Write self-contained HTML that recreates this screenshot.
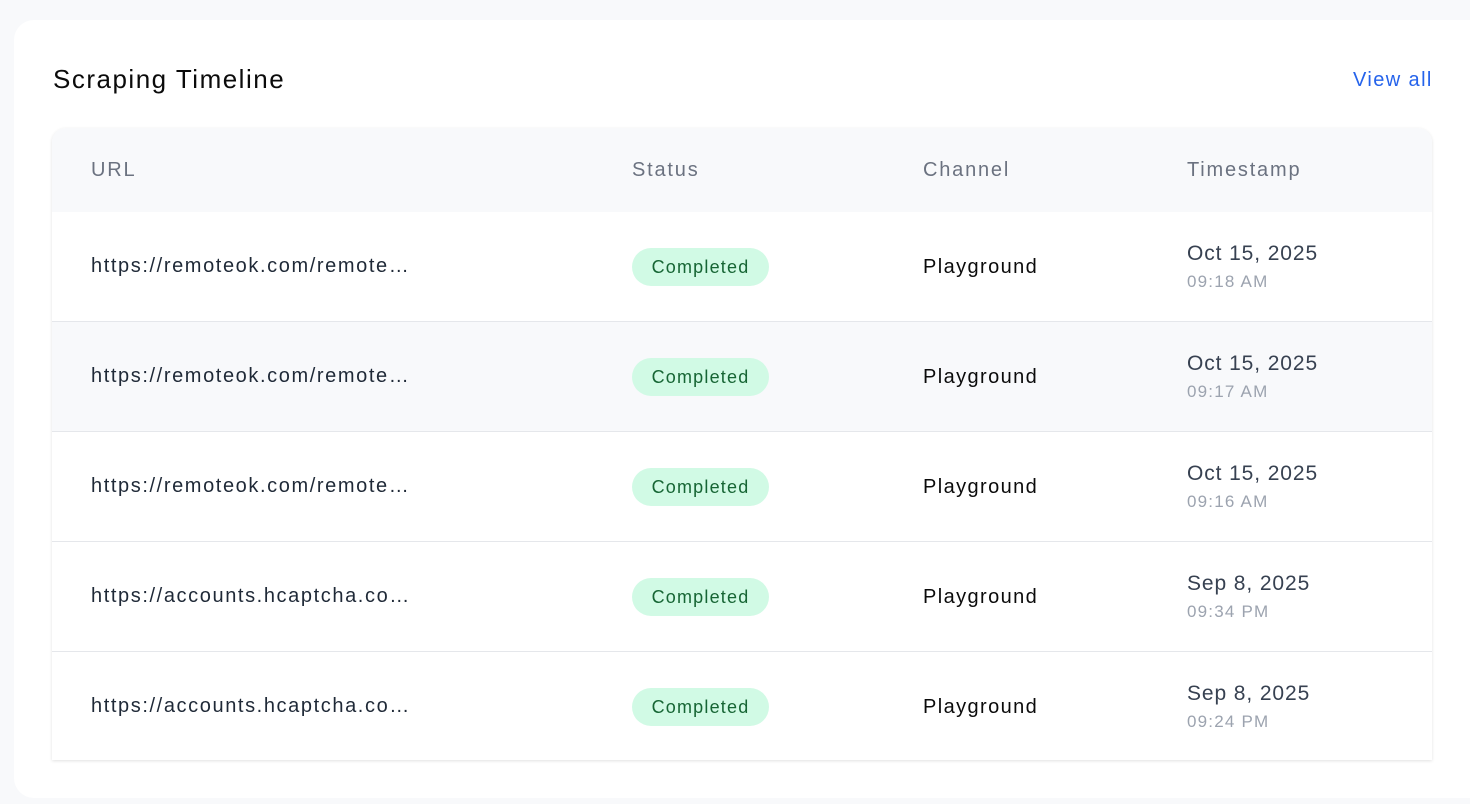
<!DOCTYPE html>
<html><head><style>
body{margin:0;width:1470px;height:804px;background:#f8f9fb;font-family:"Liberation Sans",sans-serif;overflow:hidden;position:relative;letter-spacing:1.4px}
.card{position:absolute;left:14px;top:20px;width:1480px;height:778px;background:#fff;border-radius:20px}
h1{position:absolute;left:53px;top:64px;margin:0;font-size:26px;font-weight:400;color:#0b0b0b;letter-spacing:1.5px}
.va{position:absolute;left:1353px;top:69px;font-size:20px;color:#2563eb}
.tbl{position:absolute;left:52px;top:128px;width:1380px;height:632px;background:#fff;border-radius:14px 14px 0 0;box-shadow:0 1px 3px rgba(0,0,0,.12);overflow:hidden}
.hd{height:84px;background:#f8f9fb;position:relative;color:#6b7280;font-size:20px;letter-spacing:1.8px}
.row{height:109px;border-bottom:1px solid #e5e7eb;position:relative;font-size:20px}
.row:last-child{border-bottom:none}
.c{position:absolute;white-space:nowrap}
.hd .c{top:31px}
.u{left:39px;top:43px;color:#1f2937;letter-spacing:1.6px}
.b{left:580px;top:36px;width:137px;height:38px;border-radius:19px;background:#d1fae5;color:#166534;font-size:18px;text-align:center;line-height:38px;letter-spacing:1.2px}
.ch{left:871px;top:44px;color:#0b0b0b}
.d{left:1135px;top:30px;color:#374151;font-size:21px;letter-spacing:0.9px}
.t{left:1135px;top:60px;color:#9ca3af;font-size:17px;letter-spacing:1.2px}
</style></head><body>
<div class="card"></div>
<h1>Scraping Timeline</h1>
<div class="va">View all</div>
<div class="tbl">
<div class="hd"><span class="c" style="left:39px">URL</span><span class="c" style="left:580px">Status</span><span class="c" style="left:871px">Channel</span><span class="c" style="left:1135px">Timestamp</span></div>
<div class="row"><span class="c u">https://remoteok.com/remote…</span><span class="c b">Completed</span><span class="c ch">Playground</span><span class="c d">Oct 15, 2025</span><span class="c t">09:18 AM</span></div>
<div class="row" style="background:#f8f9fb"><span class="c u">https://remoteok.com/remote…</span><span class="c b">Completed</span><span class="c ch">Playground</span><span class="c d">Oct 15, 2025</span><span class="c t">09:17 AM</span></div>
<div class="row"><span class="c u">https://remoteok.com/remote…</span><span class="c b">Completed</span><span class="c ch">Playground</span><span class="c d">Oct 15, 2025</span><span class="c t">09:16 AM</span></div>
<div class="row"><span class="c u">https://accounts.hcaptcha.co…</span><span class="c b">Completed</span><span class="c ch">Playground</span><span class="c d">Sep 8, 2025</span><span class="c t">09:34 PM</span></div>
<div class="row"><span class="c u">https://accounts.hcaptcha.co…</span><span class="c b">Completed</span><span class="c ch">Playground</span><span class="c d">Sep 8, 2025</span><span class="c t">09:24 PM</span></div>
</div>
</body></html>
